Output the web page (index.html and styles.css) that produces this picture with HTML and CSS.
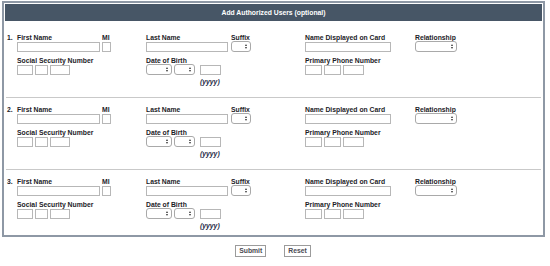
FILE: index.html
```html
<!DOCTYPE html>
<html lang="en">
  <head>
    <meta charset="UTF-8" />
    <title>Add Authorized Users</title>
    <link rel="stylesheet" href="styles.css">
  </head>
  <body>
    <form class="panel-form">
      <div class="panel">
        <div class="panel-head">Add Authorized Users (optional)</div>
        <div class="panel-body">

          <div class="user">
            <div class="num">1.</div>
            <div class="field"><label>First Name</label><input class="w-first"></div>
            <div class="field"><label>MI</label><input class="w-mi"></div>
            <div class="field"><label>Last Name</label><input class="w-last"></div>
            <div class="field"><label>Suffix</label><span class="sel w-suffix"><select></select></span></div>
            <div class="field"><label>Name Displayed on Card</label><input class="w-card"></div>
            <div class="field"><label>Relationship</label><span class="sel w-rel"><select></select></span></div>
            <div class="field span2 first-col">
              <label>Social Security Number</label>
              <div class="parts"><input class="w-ssn1"><input class="w-ssn2"><input class="w-ssn3"></div>
            </div>
            <div class="field span2">
              <label>Date of Birth</label>
              <div class="parts">
                <span class="sel w-month"><select></select></span>
                <span class="sel w-day"><select></select></span>
                <div class="year"><input class="w-year"><span class="hint">(yyyy)</span></div>
              </div>
            </div>
            <div class="field span2">
              <label>Primary Phone Number</label>
              <div class="parts"><input class="w-ph1"><input class="w-ph2"><input class="w-ph3"></div>
            </div>
          </div>

          <div class="user">
            <div class="num">2.</div>
            <div class="field"><label>First Name</label><input class="w-first"></div>
            <div class="field"><label>MI</label><input class="w-mi"></div>
            <div class="field"><label>Last Name</label><input class="w-last"></div>
            <div class="field"><label>Suffix</label><span class="sel w-suffix"><select></select></span></div>
            <div class="field"><label>Name Displayed on Card</label><input class="w-card"></div>
            <div class="field"><label>Relationship</label><span class="sel w-rel"><select></select></span></div>
            <div class="field span2 first-col">
              <label>Social Security Number</label>
              <div class="parts"><input class="w-ssn1"><input class="w-ssn2"><input class="w-ssn3"></div>
            </div>
            <div class="field span2">
              <label>Date of Birth</label>
              <div class="parts">
                <span class="sel w-month"><select></select></span>
                <span class="sel w-day"><select></select></span>
                <div class="year"><input class="w-year"><span class="hint">(yyyy)</span></div>
              </div>
            </div>
            <div class="field span2">
              <label>Primary Phone Number</label>
              <div class="parts"><input class="w-ph1"><input class="w-ph2"><input class="w-ph3"></div>
            </div>
          </div>

          <div class="user last">
            <div class="num">3.</div>
            <div class="field"><label>First Name</label><input class="w-first"></div>
            <div class="field"><label>MI</label><input class="w-mi"></div>
            <div class="field"><label>Last Name</label><input class="w-last"></div>
            <div class="field"><label>Suffix</label><span class="sel w-suffix"><select></select></span></div>
            <div class="field"><label>Name Displayed on Card</label><input class="w-card"></div>
            <div class="field"><label>Relationship</label><span class="sel w-rel"><select></select></span></div>
            <div class="field span2 first-col">
              <label>Social Security Number</label>
              <div class="parts"><input class="w-ssn1"><input class="w-ssn2"><input class="w-ssn3"></div>
            </div>
            <div class="field span2">
              <label>Date of Birth</label>
              <div class="parts">
                <span class="sel w-month"><select></select></span>
                <span class="sel w-day"><select></select></span>
                <div class="year"><input class="w-year"><span class="hint">(yyyy)</span></div>
              </div>
            </div>
            <div class="field span2">
              <label>Primary Phone Number</label>
              <div class="parts"><input class="w-ph1"><input class="w-ph2"><input class="w-ph3"></div>
            </div>
          </div>

        </div>
      </div>

      <div class="actions">
        <button type="button" class="btn">Submit</button>
        <button type="button" class="btn btn-reset">Reset</button>
      </div>
    </form>
  </body>
</html>
```

FILE: styles.css
```css
body {
  margin: 0;
  padding: 1px 0 0 2px;
  background: #fff;
  font-family: "Liberation Sans", Arial, sans-serif;
  font-size: 6.8px;
  color: #1c1c28;
}

.panel-form {
  width: 543px;
}

.panel {
  border: 2px solid #8e98a5;
  box-sizing: border-box;
}

.panel-head {
  margin: 1px 1px 0;
  height: 17px;
  line-height: 17px;
  background: #475666;
  color: #fff;
  font-weight: bold;
  text-align: center;
}

.panel-body {
  padding-top: 5px;
}

.user {
  display: grid;
  grid-template-columns: 10px 85px 44px 85px 74px 110px 1fr;
  row-gap: 5px;
  margin: 0 2px;
  padding: 8px 0 11px 1px;
  border-bottom: 1px solid #c9c9c9;
}

.user.last {
  border-bottom: none;
  padding-bottom: 5px;
}

.num {
  font-weight: bold;
  line-height: 8px;
}

.field {
  display: flex;
  flex-direction: column;
  align-items: flex-start;
}

.field label {
  display: block;
  font-weight: bold;
  line-height: 8px;
  height: 8px;
  white-space: nowrap;
}

.span2 {
  grid-column: span 2;
}

.first-col {
  grid-column: 2 / span 2;
}

.parts {
  display: flex;
  align-items: flex-start;
  gap: 2px;
}

input {
  box-sizing: border-box;
  height: 10px;
  margin: 0;
  padding: 0;
  border: 1px solid #b7b7b7;
  background: #fff;
}

.sel {
  position: relative;
  display: block;
  margin-top: -1px;
}

.sel select {
  appearance: none;
  -webkit-appearance: none;
  box-sizing: border-box;
  display: block;
  width: 100%;
  height: 11px;
  margin: 0;
  padding: 0;
  border: 1px solid #a9a9a9;
  border-radius: 3px;
  background: #fff;
}

/* up/down arrows of the select */
.sel::before,
.sel::after {
  content: "";
  position: absolute;
  right: 4px;
  width: 0;
  height: 0;
  border-left: 1.5px solid transparent;
  border-right: 1.5px solid transparent;
}

.sel::before {
  top: 2.5px;
  border-bottom: 2px solid #333;
}

.sel::after {
  top: 5.5px;
  border-top: 2px solid #333;
}

.w-first { width: 83px; }
.w-mi { width: 9px; }
.w-last { width: 82px; }
.w-suffix { width: 20px; }
.w-card { width: 86px; }
.w-rel { width: 42px; }

.w-ssn1 { width: 16px; }
.w-ssn2 { width: 13px; }
.w-ssn3 { width: 20px; }

.w-month { width: 26px; }
.w-day { width: 21px; }
.w-year { width: 21px; }

.w-ph1 { width: 17px; }
.w-ph2 { width: 17px; }
.w-ph3 { width: 21px; }

.year {
  display: flex;
  flex-direction: column;
  margin-left: 3px;
}

.hint {
  margin-top: 3px;
  line-height: 8px;
  font-weight: bold;
  font-style: italic;
  color: #1d2644;
}

.actions {
  display: flex;
  justify-content: center;
  gap: 18px;
  margin-top: 8px;
  padding-right: 1px;
}

.btn {
  height: 12px;
  margin: 0;
  padding: 0 3px;
  border: 1px solid #9b9b9b;
  background: #fff;
  font-family: "Liberation Sans", Arial, sans-serif;
  font-size: 6.8px;
  font-weight: bold;
  color: #4a4a52;
  line-height: 10px;
}
```
